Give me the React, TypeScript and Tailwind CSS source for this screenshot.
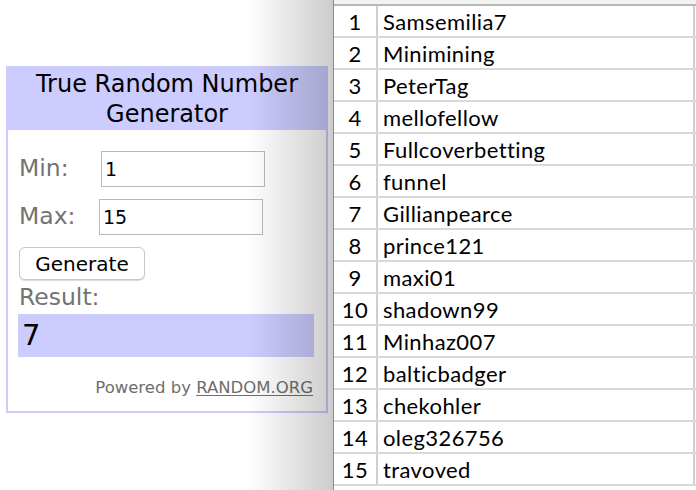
const names = [
  "Samsemilia7",
  "Minimining",
  "PeterTag",
  "mellofellow",
  "Fullcoverbetting",
  "funnel",
  "Gillianpearce",
  "prince121",
  "maxi01",
  "shadown99",
  "Minhaz007",
  "balticbadger",
  "chekohler",
  "oleg326756",
  "travoved",
];

const RandomWidget = () => {
  return (
    <div className="w-[322px] border-2 border-[#ccccff] bg-white font-['DejaVu_Sans',sans-serif]">
      <div className="h-[62px] bg-[#ccccff] pt-[1px] text-center text-[24px] leading-[30px] text-black">
        True Random Number Generator
      </div>
      <div className="px-[11px] pt-[21px] pb-[10px]">
        <div className="flex items-center">
          <span className="w-[82px] text-[23.5px] text-[#737373]">Min:</span>
          <div className="flex h-[36px] w-[164px] items-center border border-[#b9b9b9] px-[3px] text-[19px] text-black">
            1
          </div>
        </div>
        <div className="mt-[12px] flex items-center">
          <span className="w-[80px] text-[23.5px] text-[#737373]">Max:</span>
          <div className="flex h-[36px] w-[164px] items-center border border-[#b9b9b9] px-[3px] text-[19px] text-black">
            15
          </div>
        </div>
        <button className="mt-[12px] h-[33px] w-[126px] rounded-[6px] border border-[#c8c8c8] bg-white text-[20px] text-black shadow-[0_1px_1px_rgba(0,0,0,0.15)]">
          Generate
        </button>
        <div className="mt-[3px] text-[23.5px] leading-[28px] text-[#737373]">Result:</div>
        <div className="-ml-px mt-[3px] flex h-[43px] w-[296px] items-center bg-[#ccccff] px-[4px] text-[29px] text-black">
          7
        </div>
        <div className="mt-[19px] pr-[2px] text-right text-[16.5px] text-[#6e6e6e]">
          Powered by <span className="underline underline-offset-2">RANDOM.ORG</span>
        </div>
      </div>
    </div>
  );
};

const Sheet = () => {
  return (
    <div className="flex-1 bg-white font-['Lato',sans-serif] text-[22px] tracking-[0.4px] text-black">
      <div className="h-[4px] bg-[#f3f3f3]" />
      <div className="h-[2px] bg-[#b8b8b8]" />
      {names.map((name, i) => (
        <div key={name} className="flex h-[32px] border-b-2 border-[#dadada]">
          <div className="flex w-[44px] items-center justify-center border-r-2 border-[#cfcfcf]">
            {i + 1}
          </div>
          <div className="flex flex-1 items-center border-r-2 border-[#cfcfcf] pl-[5px]">{name}</div>
          <div className="w-[1px]" />
        </div>
      ))}
    </div>
  );
};

export default function App() {
  return (
    <div className="flex h-[490px] w-[696px] overflow-hidden bg-white">
      <div className="relative w-[333px] pl-[6px] pt-[66px]">
        <RandomWidget />
        <div className="pointer-events-none absolute inset-y-0 right-0 w-[85px] bg-gradient-to-r from-transparent to-[rgba(0,0,0,0.2)]" />
      </div>
      <div className="w-px bg-[#8c8c8c]" />
      <Sheet />
    </div>
  );
}
